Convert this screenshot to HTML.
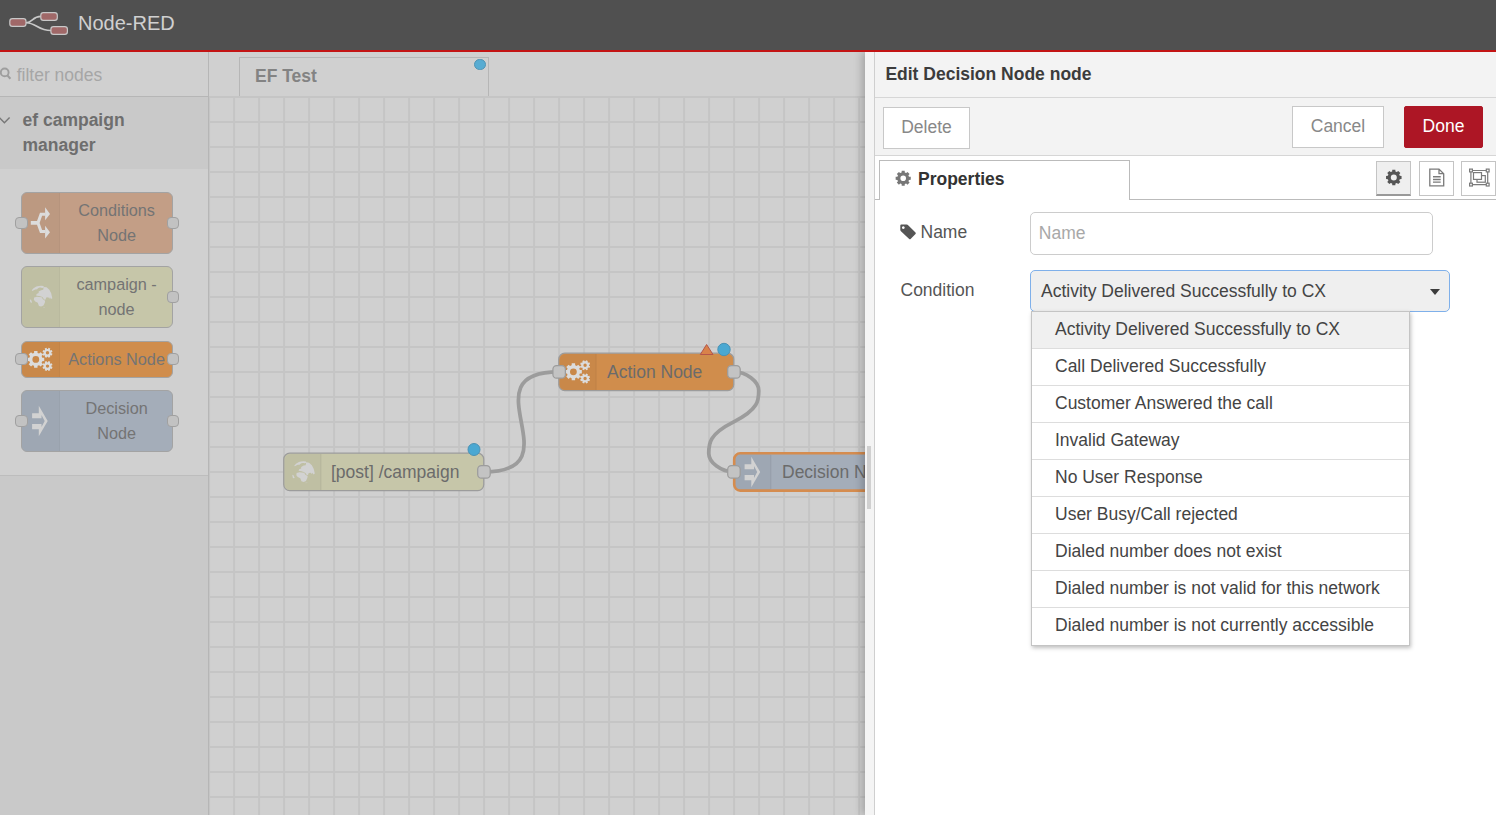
<!DOCTYPE html>
<html><head><meta charset="utf-8"><title>Node-RED</title>
<style>
*{box-sizing:border-box;margin:0;padding:0}
html,body{width:1496px;height:815px;overflow:hidden;background:#d0d0d0;font-family:"Liberation Sans",Arial,sans-serif;font-size:17.5px;color:#555}
.abs{position:absolute}
svg{overflow:visible}
#header{left:0;top:0;width:1496px;height:52px;background:#505050;border-bottom:2px solid #c31414;z-index:5}
#title{left:78px;top:10.5px;font-size:20px;color:#d0d0d0;line-height:24px}
#palette{left:0;top:52px;width:209px;height:763px;background:#c9c9c9;border-right:1px solid #b6b6b6}
#psearch{left:0;top:0;width:208px;height:45px;border-bottom:1px solid #b6b6b6;background:#d0d0d0}
#psearch span{position:absolute;left:16.7px;top:12px;font-size:17.5px;color:#a6a6a6;line-height:22px}
#pcat{left:0;top:45px;width:208px;height:72px;background:#c9c9c9;}
#pcat .t{position:absolute;left:22.5px;top:11px;font-weight:bold;font-size:17.5px;line-height:25px;color:#6e6e6e}
#pbody{left:0;top:117px;width:208px;height:307px;background:#d0d0d0;border-bottom:1px solid #bdbdbd}
.pn{position:absolute;left:21px;width:152px;border:1px solid #a3a3a3;border-radius:6px;font-size:16.25px;line-height:25px;text-align:center;color:#747474;overflow:visible}
.pn .ic{position:absolute;left:0;top:0;bottom:0;width:37.5px;background:rgba(0,0,0,0.03);border-right:1px solid rgba(0,0,0,0.035);border-radius:5px 0 0 5px}
.pn .lb{position:absolute;left:39.2px;right:0;top:0;bottom:0;display:flex;align-items:center;justify-content:center;text-align:center;white-space:nowrap}
.pn svg{position:absolute;left:-1px;top:-1px;width:10px;height:10px}
.port{position:absolute;width:12px;height:12px;background:#c2c2c2;border:1px solid #a0a0a0;border-radius:4px}
.port.l{left:-7px;width:13px}
.port.r{right:-7px}
#ws{left:209px;top:52px;width:656px;height:763px;background:#d0d0d0;overflow:hidden}
#tabs{left:0;top:0;width:656px;height:45px;border-bottom:1px solid #b6b6b6;background:#d0d0d0}
#tab{left:30px;top:5px;width:250px;height:41px;border:1px solid #b6b6b6;border-bottom:none;background:#d0d0d0}
#tab span{position:absolute;left:15px;top:7px;font-weight:bold;font-size:17.5px;color:#838383;line-height:22px}
#chart{left:0;top:45px;width:656px;height:718px;background:#d0d0d0}
#tray{left:865px;top:52px;width:631px;height:763px;background:#fff;box-shadow:-3px 0 8px rgba(0,0,0,0.22)}
#handle{left:0;top:0;width:10px;height:763px;background:#f4f4f4;border-right:1px solid #cfcfcf}
#grip{left:2px;top:394px;width:4px;height:63px;background:#d0d0d0}
#thead{left:10px;top:0;width:621px;height:46px;background:#f3f3f3;border-bottom:1px solid #d6d6d6}
#thead span{position:absolute;left:10.4px;top:11px;font-weight:bold;font-size:17.5px;color:#3c3c3c;line-height:22px}
#tbar{left:10px;top:46px;width:621px;height:58px;background:#f3f3f3;border-bottom:1px solid #d6d6d6}
.btn{position:absolute;border:1px solid #c8c8c8;background:#fff;color:#888;font-size:17.5px;text-align:center;height:41px;line-height:38px}
#ttabs{left:10px;top:104px;width:621px;height:44px;border-bottom:1px solid #bbb;background:#fff}
#ptab{left:4px;top:4px;width:251px;height:40px;border:1px solid #bbb;border-bottom:none;background:#fff}
#ptab span{position:absolute;left:38px;top:8px;font-weight:bold;color:#333;line-height:20px;font-size:17.5px}
.ib{position:absolute;top:5px;width:35px;height:35px;border:1px solid #c4c4c4;background:#fff}
label{position:absolute;font-size:17.5px;color:#555;line-height:22px}
#name{left:165px;top:160px;width:403px;height:43px;border:1px solid #ccc;border-radius:5px;background:#fff}
#name span{position:absolute;left:7.8px;top:8.5px;color:#a8a8a8;font-size:17.5px;line-height:22px}
#sel{left:165px;top:218px;width:420px;height:42px;border:1px solid #7fb0ea;border-radius:5px;background:#efefef}
#sel span{position:absolute;left:10px;top:9px;color:#444;font-size:17.5px;line-height:22px}
#sel i{position:absolute;right:8.6px;top:18px;border:5.7px solid transparent;border-top:6.2px solid #3c3c3c;border-bottom:none;width:0;height:0}
#dd{left:166px;top:259px;width:379px;height:335px;background:#fff;border:1px solid #c4c4c4;box-shadow:1px 2px 4px rgba(0,0,0,0.25)}
#dd div{height:37px;border-bottom:1px solid #ddd;padding-left:23px;line-height:35px;font-size:17.5px;color:#444;white-space:nowrap}
#dd div:last-child{border-bottom:none}
#dd div.s{background:#f0f0f0}
</style></head><body>
<div id="header" class="abs">
<svg class="abs" style="left:0;top:0" width="80" height="50" viewBox="0 0 80 50">
<path d="M26 22.7 C33 22.7 32 16.4 41 16.4 M26 22.7 C36 22.7 38 30.5 51 30.5" fill="none" stroke="#c8c8c8" stroke-width="1.6"/>
<rect x="9.8" y="18.7" width="16.2" height="7.7" rx="2.6" fill="#a06868" stroke="#c8c8c8" stroke-width="1.2"/>
<rect x="40.8" y="12.6" width="16.5" height="7.7" rx="2.6" fill="#a06868" stroke="#c8c8c8" stroke-width="1.2"/>
<rect x="50.9" y="26.7" width="16.5" height="7.7" rx="2.6" fill="#a06868" stroke="#c8c8c8" stroke-width="1.2"/>
</svg>
<div id="title" class="abs">Node-RED</div>
</div>

<div id="palette" class="abs">
 <div id="psearch" class="abs">
  <svg class="abs" style="left:0;top:15px" width="12" height="14" viewBox="0 0 12 14"><circle cx="4.7" cy="5.4" r="3.9" fill="none" stroke="#9e9e9e" stroke-width="1.9"/><path d="M7.4 8.4 L10.4 11.8" stroke="#9e9e9e" stroke-width="2.1"/></svg>
  <span>filter nodes</span></div>
 <div id="pcat" class="abs">
  <svg class="abs" style="left:0;top:17px" width="12" height="10" viewBox="0 0 12 10"><path d="M-0.8 3.4 L4.4 8.7 L9.6 3.4" fill="none" stroke="#777" stroke-width="1.4"/></svg>
  <div class="t">ef campaign<br>manager</div></div>
 <div id="pbody" class="abs"></div>
 <div class="pn" style="top:140px;height:62px;background:#c39e86"><div class="ic"></div><div class="lb">Conditions<br>Node</div>
   <svg><g transform="translate(0.40 0.40)" fill="#dcdcdc" stroke="none"><path d="M9.4 28.6 H15.6 L18.6 20.3 H23.7 V23.3 H20.7 L18.2 30.5 L20.7 37.7 H23.7 V40.7 H18.6 L15.6 32.4 H9.4Z"/><path d="M23.7 14.9 L28.6 21.6 L23.7 27.8Z M23.7 33.4 L28.6 39.8 L23.7 46.2Z"/></g></svg>
   <div class="port l" style="top:24px"></div><div class="port r" style="top:24px"></div></div>
 <div class="pn" style="top:214px;height:62px;background:#c6c6a9"><div class="ic"></div><div class="lb">campaign -<br>node</div>
   <svg><g transform="translate(-1.00 9.00) scale(0.05647)" fill="#d2d2d2"><path d="M208 272 Q230 235 290 205 Q350 185 415 195 L425 215 Q400 235 380 225 Q340 215 320 235 Q300 260 270 255 Q240 265 220 282 Z"/><path d="M330 292 L375 268 L410 262 L420 212 L470 218 L520 262 L552 325 L572 410 L548 425 L530 395 L520 420 L500 395 L465 400 L450 440 L425 432 L405 400 L375 382 L335 370 L285 362 L295 335 L330 320 Z"/><path d="M250 400 L300 386 L385 394 L405 430 L445 455 L440 490 L415 540 L375 558 L335 548 L315 492 L270 470 L245 440 Z"/><path d="M173 432 L195 440 L212 480 L203 497 L182 478 Z"/><path d="M405 570 L440 568 L440 578 L410 580Z" opacity="0.5"/></g></svg>
   <div class="port r" style="top:24px"></div></div>
 <div class="pn" style="top:289px;height:37px;background:#d08d4c"><div class="ic"></div><div class="lb">Actions Node</div>
   <svg><path fill="#dcdcdc" fill-rule="evenodd" d="M21.26 16.63 L23.23 16.72 L23.23 20.08 L21.26 20.17 L20.62 21.72 L21.95 23.18 L19.58 25.55 L18.12 24.22 L16.57 24.86 L16.48 26.83 L13.12 26.83 L13.03 24.86 L11.48 24.22 L10.02 25.55 L7.65 23.18 L8.98 21.72 L8.34 20.17 L6.37 20.08 L6.37 16.72 L8.34 16.63 L8.98 15.08 L7.65 13.62 L10.02 11.25 L11.48 12.58 L13.03 11.94 L13.12 9.97 L16.48 9.97 L16.57 11.94 L18.12 12.58 L19.58 11.25 L21.95 13.62 L20.62 15.08Z M11.40 18.40 a3.40 3.40 0 1 0 6.80 0 a3.40 3.40 0 1 0 -6.80 0Z M30.37 12.28 L31.50 12.78 L30.75 14.62 L29.59 14.18 L28.90 14.88 L29.34 16.03 L27.51 16.80 L27.00 15.67 L26.02 15.67 L25.52 16.80 L23.68 16.05 L24.12 14.89 L23.42 14.20 L22.27 14.64 L21.50 12.81 L22.63 12.30 L22.63 11.32 L21.50 10.82 L22.25 8.98 L23.41 9.42 L24.10 8.72 L23.66 7.57 L25.49 6.80 L26.00 7.93 L26.98 7.93 L27.48 6.80 L29.32 7.55 L28.88 8.71 L29.58 9.40 L30.73 8.96 L31.50 10.79 L30.37 11.30Z M24.80 11.80 a1.70 1.70 0 1 0 3.40 0 a1.70 1.70 0 1 0 -3.40 0Z M30.37 25.58 L31.50 26.08 L30.75 27.92 L29.59 27.48 L28.90 28.18 L29.34 29.33 L27.51 30.10 L27.00 28.97 L26.02 28.97 L25.52 30.10 L23.68 29.35 L24.12 28.19 L23.42 27.50 L22.27 27.94 L21.50 26.11 L22.63 25.60 L22.63 24.62 L21.50 24.12 L22.25 22.28 L23.41 22.72 L24.10 22.02 L23.66 20.87 L25.49 20.10 L26.00 21.23 L26.98 21.23 L27.48 20.10 L29.32 20.85 L28.88 22.01 L29.58 22.70 L30.73 22.26 L31.50 24.09 L30.37 24.60Z M24.80 25.10 a1.70 1.70 0 1 0 3.40 0 a1.70 1.70 0 1 0 -3.40 0Z"/></svg>
   <div class="port l" style="top:11px"></div><div class="port r" style="top:11px"></div></div>
 <div class="pn" style="top:338px;height:62px;background:#a4adb9"><div class="ic"></div><div class="lb">Decision<br>Node</div>
   <svg><g transform="translate(0.50 12.50)" fill="#d2d2d2"><path d="M17.3 3.3 L26.2 18.5 L17.3 33.7 V26.7 H10.6 V21.6 H20 V24.6 L23.2 18.5 L20 12.4 V15.7 H10.6 V10.7 H17.3Z"/></g></svg>
   <div class="port l" style="top:24px"></div><div class="port r" style="top:24px"></div></div>
</div>

<div id="ws" class="abs">
 <div id="tabs" class="abs"><div id="tab" class="abs"><span>EF Test</span>
   <div class="abs" style="left:234.2px;top:0.9px;width:11.6px;height:11.6px;border-radius:6px;background:#58acd2;border:1px solid #5094b4"></div></div></div>
 <div id="chart" class="abs">
 <svg class="abs" style="left:0;top:0" width="656" height="718" viewBox="209 97 656 718">
  <g stroke="#c5c5c5" stroke-width="2" fill="none">
   <path d="M209.10 97V815M234.10 97V815M259.10 97V815M284.10 97V815M309.10 97V815M334.10 97V815M359.10 97V815M384.10 97V815M409.10 97V815M434.10 97V815M459.10 97V815M484.10 97V815M509.10 97V815M534.10 97V815M559.10 97V815M584.10 97V815M609.10 97V815M634.10 97V815M659.10 97V815M684.10 97V815M709.10 97V815M734.10 97V815M759.10 97V815M784.10 97V815M809.10 97V815M834.10 97V815M859.10 97V815M209 96.90H866M209 121.90H866M209 146.90H866M209 171.90H866M209 196.90H866M209 221.90H866M209 246.90H866M209 271.90H866M209 296.90H866M209 321.90H866M209 346.90H866M209 371.90H866M209 396.90H866M209 421.90H866M209 446.90H866M209 471.90H866M209 496.90H866M209 521.90H866M209 546.90H866M209 571.90H866M209 596.90H866M209 621.90H866M209 646.90H866M209 671.90H866M209 696.90H866M209 721.90H866M209 746.90H866M209 771.90H866M209 796.90H866"/>
  </g>
  <g font-family="Liberation Sans, Arial, sans-serif" font-size="17.5" fill="#6b6b6b">
  <g transform="translate(208.75 96.875) scale(1.25)" fill="none" stroke="#9c9c9c" stroke-width="3"><path d="M220 300 C295 300 205 220 280 220"/><path d="M420 220 C430 220 440 227.5 440 235 S440 250 420 260 S400 277.5 400 285 S410 300 420 300"/></g>
  <!-- campaign node -->
  <rect x="283.75" y="453.2" width="200" height="37.4" rx="6" fill="#c6c6a9" stroke="#9c9c9c" stroke-width="1.25"/>
  <path d="M284.6 459.5 a6 6 0 0 1 6 -5.4 h30 v36 h-30 a6 6 0 0 1 -6 -5.4z" fill="rgba(0,0,0,0.03)"/>
  <path d="M320.9 454 v36" stroke="rgba(0,0,0,0.08)" stroke-width="1"/>
  <g transform="translate(282.50 450.40) scale(0.05647)" fill="#d2d2d2"><path d="M208 272 Q230 235 290 205 Q350 185 415 195 L425 215 Q400 235 380 225 Q340 215 320 235 Q300 260 270 255 Q240 265 220 282 Z"/><path d="M330 292 L375 268 L410 262 L420 212 L470 218 L520 262 L552 325 L572 410 L548 425 L530 395 L520 420 L500 395 L465 400 L450 440 L425 432 L405 400 L375 382 L335 370 L285 362 L295 335 L330 320 Z"/><path d="M250 400 L300 386 L385 394 L405 430 L445 455 L440 490 L415 540 L375 558 L335 548 L315 492 L270 470 L245 440 Z"/><path d="M173 432 L195 440 L212 480 L203 497 L182 478 Z"/><path d="M405 570 L440 568 L440 578 L410 580Z" opacity="0.5"/></g>
  <text x="331" y="478">[post] /campaign</text>
  <rect x="477.7" y="465.6" width="12.5" height="12.5" rx="3.7" fill="#c3c3c3" stroke="#9c9c9c" stroke-width="1.25"/>
  <circle cx="474" cy="449.5" r="6" fill="#4aa8d2" stroke="#4a92b4" stroke-width="1"/>
  <!-- action node -->
  <rect x="558.75" y="353.2" width="175" height="37.4" rx="6" fill="#d08d4c" stroke="#9c9c9c" stroke-width="1.25"/>
  <path d="M559.6 359.5 a6 6 0 0 1 6 -5.4 h30 v36 h-30 a6 6 0 0 1 -6 -5.4z" fill="rgba(0,0,0,0.03)"/>
  <path d="M596 354 v36" stroke="rgba(0,0,0,0.08)" stroke-width="1"/>
  <path fill="#dcdcdc" fill-rule="evenodd" d="M579.86 370.03 L581.83 370.12 L581.83 373.48 L579.86 373.57 L579.22 375.12 L580.55 376.58 L578.18 378.95 L576.72 377.62 L575.17 378.26 L575.08 380.23 L571.72 380.23 L571.63 378.26 L570.08 377.62 L568.62 378.95 L566.25 376.58 L567.58 375.12 L566.94 373.57 L564.97 373.48 L564.97 370.12 L566.94 370.03 L567.58 368.48 L566.25 367.02 L568.62 364.65 L570.08 365.98 L571.63 365.34 L571.72 363.37 L575.08 363.37 L575.17 365.34 L576.72 365.98 L578.18 364.65 L580.55 367.02 L579.22 368.48Z M570.00 371.80 a3.40 3.40 0 1 0 6.80 0 a3.40 3.40 0 1 0 -6.80 0Z M588.97 365.68 L590.10 366.18 L589.35 368.02 L588.19 367.58 L587.50 368.28 L587.94 369.43 L586.11 370.20 L585.60 369.07 L584.62 369.07 L584.12 370.20 L582.28 369.45 L582.72 368.29 L582.02 367.60 L580.87 368.04 L580.10 366.21 L581.23 365.70 L581.23 364.72 L580.10 364.22 L580.85 362.38 L582.01 362.82 L582.70 362.12 L582.26 360.97 L584.09 360.20 L584.60 361.33 L585.58 361.33 L586.08 360.20 L587.92 360.95 L587.48 362.11 L588.18 362.80 L589.33 362.36 L590.10 364.19 L588.97 364.70Z M583.40 365.20 a1.70 1.70 0 1 0 3.40 0 a1.70 1.70 0 1 0 -3.40 0Z M588.97 378.98 L590.10 379.48 L589.35 381.32 L588.19 380.88 L587.50 381.58 L587.94 382.73 L586.11 383.50 L585.60 382.37 L584.62 382.37 L584.12 383.50 L582.28 382.75 L582.72 381.59 L582.02 380.90 L580.87 381.34 L580.10 379.51 L581.23 379.00 L581.23 378.02 L580.10 377.52 L580.85 375.68 L582.01 376.12 L582.70 375.42 L582.26 374.27 L584.09 373.50 L584.60 374.63 L585.58 374.63 L586.08 373.50 L587.92 374.25 L587.48 375.41 L588.18 376.10 L589.33 375.66 L590.10 377.49 L588.97 378.00Z M583.40 378.50 a1.70 1.70 0 1 0 3.40 0 a1.70 1.70 0 1 0 -3.40 0Z"/>
  <text x="607" y="378">Action Node</text>
  <rect x="552.9" y="365.6" width="12.5" height="12.5" rx="3.7" fill="#c3c3c3" stroke="#9c9c9c" stroke-width="1.25"/>
  <rect x="727.7" y="365.6" width="12.5" height="12.5" rx="3.7" fill="#c3c3c3" stroke="#9c9c9c" stroke-width="1.25"/>
  <path d="M700.3 354.5 L706.6 344.5 L713 354.5z" fill="#d9824a" stroke="#b5564a" stroke-width="1"/>
  <circle cx="724" cy="349.5" r="6.2" fill="#4aa8d2" stroke="#4a92b4" stroke-width="1"/>
  <!-- decision node -->
  <rect x="734.2" y="453.3" width="200" height="37.3" rx="6" fill="#a4adb9" stroke="#d58c4f" stroke-width="2.6"/>
  <path d="M735.5 459.5 a6 6 0 0 1 6 -5 h29 v35 h-29 a6 6 0 0 1 -6 -5z" fill="rgba(0,0,0,0.03)"/>
  <path d="M770.8 455 v34" stroke="rgba(0,0,0,0.08)" stroke-width="1"/>
  <g transform="translate(734.00 453.50)" fill="#d2d2d2"><path d="M17.3 3.3 L26.2 18.5 L17.3 33.7 V26.7 H10.6 V21.6 H20 V24.6 L23.2 18.5 L20 12.4 V15.7 H10.6 V10.7 H17.3Z"/></g>
  <text x="782" y="478">Decision Node</text>
  <rect x="727.7" y="465.6" width="12.5" height="12.5" rx="3.7" fill="#c3c3c3" stroke="#9c9c9c" stroke-width="1.25"/>
  </g>
 </svg>
 </div>
</div>

<div id="tray" class="abs">
 <div id="handle" class="abs"><div id="grip" class="abs"></div></div>
 <div id="thead" class="abs"><span>Edit Decision Node node</span></div>
 <div id="tbar" class="abs">
  <div class="btn" style="left:8px;top:9px;width:87px;height:42px;line-height:39px">Delete</div>
  <div class="btn" style="left:417px;top:8px;width:92px;height:42px;line-height:39px">Cancel</div>
  <div class="btn" style="left:529px;top:8px;width:79px;height:42px;line-height:39px;border-radius:2px;background:#ad1625;border-color:#ad1625;color:#fff">Done</div>
 </div>
 <div id="ttabs" class="abs">
  <div id="ptab" class="abs"><svg class="abs" style="left:15.5px;top:8.5px" width="16" height="16"><path fill="#777" fill-rule="evenodd" d="M12.99 6.72 L14.75 6.80 L14.75 9.80 L12.99 9.88 L12.41 11.27 L13.60 12.58 L11.48 14.70 L10.17 13.51 L8.78 14.09 L8.70 15.85 L5.70 15.85 L5.62 14.09 L4.23 13.51 L2.92 14.70 L0.80 12.58 L1.99 11.27 L1.41 9.88 L-0.35 9.80 L-0.35 6.80 L1.41 6.72 L1.99 5.33 L0.80 4.02 L2.92 1.90 L4.23 3.09 L5.62 2.51 L5.70 0.75 L8.70 0.75 L8.78 2.51 L10.17 3.09 L11.48 1.90 L13.60 4.02 L12.41 5.33Z M4.40 8.30 a2.80 2.80 0 1 0 5.60 0 a2.80 2.80 0 1 0 -5.60 0Z"/></svg><span>Properties</span></div>
  <div class="ib" style="left:501px;border-bottom:2px solid #999;background:#efefef"><svg class="abs" style="left:-1px;top:-1px" width="35" height="35"><path fill="#555" fill-rule="evenodd" d="M23.78 14.86 L25.55 14.96 L25.55 18.04 L23.78 18.14 L23.19 19.57 L24.37 20.89 L22.19 23.07 L20.87 21.89 L19.44 22.48 L19.34 24.25 L16.26 24.25 L16.16 22.48 L14.73 21.89 L13.41 23.07 L11.23 20.89 L12.41 19.57 L11.82 18.14 L10.05 18.04 L10.05 14.96 L11.82 14.86 L12.41 13.43 L11.23 12.11 L13.41 9.93 L14.73 11.11 L16.16 10.52 L16.26 8.75 L19.34 8.75 L19.44 10.52 L20.87 11.11 L22.19 9.93 L24.37 12.11 L23.19 13.43Z M14.80 16.50 a3.00 3.00 0 1 0 6.00 0 a3.00 3.00 0 1 0 -6.00 0Z"/></svg></div>
  <div class="ib" style="left:544px"><svg class="abs" style="left:-1px;top:-1px" width="35" height="35" fill="none" stroke="#7a7a7a" stroke-width="1.3">
    <path d="M10.8 8.1 H20 L24.7 12.7 V24.9 H10.8Z M20 8.1 V12.7 H24.7"/><path d="M14 15.8 H21.7 M14 18.5 H21.7 M14 21.1 H21.7" stroke-width="1.4"/></svg></div>
  <div class="ib" style="left:586px"><svg class="abs" style="left:-1px;top:-1px" width="35" height="35" fill="none" stroke="#7a7a7a" stroke-width="1.2">
    <path d="M9.9 9.5 H26.7 V23.6 H9.9Z"/>
    <rect x="16" y="14.6" width="8.3" height="6.6" fill="#fff"/><rect x="12.5" y="11.6" width="8" height="6.8" fill="#fff"/>
    <rect x="8.6" y="8.1" width="2.8" height="2.8" fill="#fff"/><rect x="25.3" y="8.1" width="2.8" height="2.8" fill="#fff"/><rect x="8.6" y="22.2" width="2.8" height="2.8" fill="#fff"/><rect x="25.3" y="22.2" width="2.8" height="2.8" fill="#fff"/></svg></div>
 </div>
 <svg class="abs" style="left:35px;top:171.5px" width="17" height="16"><path d="M0.3 1.6 Q0.3 0.6 1.3 0.6 H6.6 Q7.6 0.6 8.4 1.4 L15.5 8.5 Q16.2 9.2 15.5 9.9 L10.6 14.9 Q9.9 15.6 9.2 14.9 L1.2 7.6 Q0.3 6.8 0.3 5.8Z M3.3 2.2 a1.4 1.4 0 1 0 0.01 0Z" fill="#555" fill-rule="evenodd"/></svg>
 <label style="left:55.5px;top:169px">Name</label>
 <label style="left:35.5px;top:227px">Condition</label>
 <div id="name" class="abs"><span>Name</span></div>
 <div id="sel" class="abs"><span>Activity Delivered Successfully to CX</span><i></i></div>
 <div id="dd" class="abs">
  <div class="s">Activity Delivered Successfully to CX</div>
  <div>Call Delivered Successfully</div>
  <div>Customer Answered the call</div>
  <div>Invalid Gateway</div>
  <div>No User Response</div>
  <div>User Busy/Call rejected</div>
  <div>Dialed number does not exist</div>
  <div>Dialed number is not valid for this network</div>
  <div>Dialed number is not currently accessible</div>
 </div>
</div>
</body></html>
